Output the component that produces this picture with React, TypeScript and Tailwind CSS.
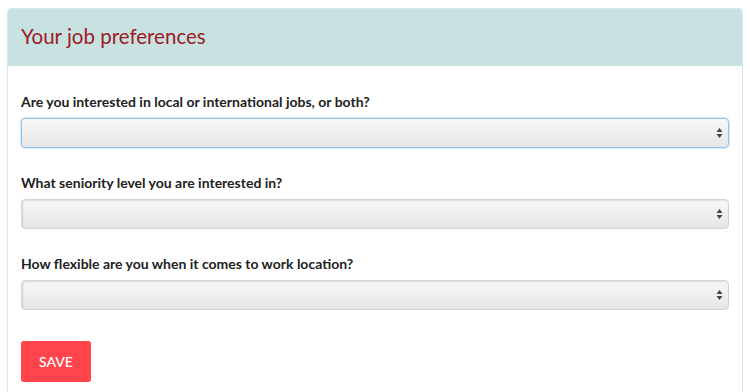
import React from "react";

function FakeSelect({ focused }: { focused?: boolean }) {
  return (
    <div
      className={
        "relative h-[30px] w-full rounded-[4px] border bg-gradient-to-b from-[#f8f8f8] to-[#e6e6e6] " +
        (focused
          ? "border-[#8fc3ee] shadow-[0_0_0_1px_rgba(143,195,238,0.35)]"
          : "border-[#d4d4d4] shadow-[inset_1px_1px_2px_rgba(0,0,0,0.12)]")
      }
    >
      <svg
        className="absolute right-[5px] top-1/2 -translate-y-1/2"
        width="7"
        height="11"
        viewBox="0 0 7 11"
      >
        <path d="M3.5 0.5 L6.5 4.5 L0.5 4.5 Z" fill="#444" />
        <path d="M3.5 10.5 L6.5 6.5 L0.5 6.5 Z" fill="#444" />
      </svg>
    </div>
  );
}

export default function App() {
  const questions = [
    "Are you interested in local or international jobs, or both?",
    "What seniority level you are interested in?",
    "How flexible are you when it comes to work location?",
  ];
  return (
    <div
      className="h-[392px] w-[750px] overflow-hidden bg-white pl-[7px] pr-[7px] pt-[8px]"
      style={{ fontFamily: "Lato, 'Noto Sans', sans-serif" }}
    >
      <div className="h-[400px] rounded-t-[4px] border border-[#d5e8e8] bg-white">
        <div className="flex h-[57px] items-center rounded-t-[3px] bg-[#c8e2e2] px-[13px] pb-[2px]">
          <h1 className="text-[20.5px] font-normal text-[#9b1c24]">Your job preferences</h1>
        </div>
        <div className="flex flex-col px-[13px] pt-[27px]">
          {questions.map((q, i) => (
            <div key={q} className="mb-[26px] flex flex-col">
              <label className="mb-[7px] text-[14px] font-bold leading-[18px] text-[#222]">{q}</label>
              <FakeSelect focused={i === 0} />
            </div>
          ))}
          <div className="mt-[5px]">
            <button className="h-[41px] w-[70px] rounded-[3px] bg-[#ff444b] text-[14px] font-medium text-white">
              SAVE
            </button>
          </div>
        </div>
      </div>
    </div>
  );
}
